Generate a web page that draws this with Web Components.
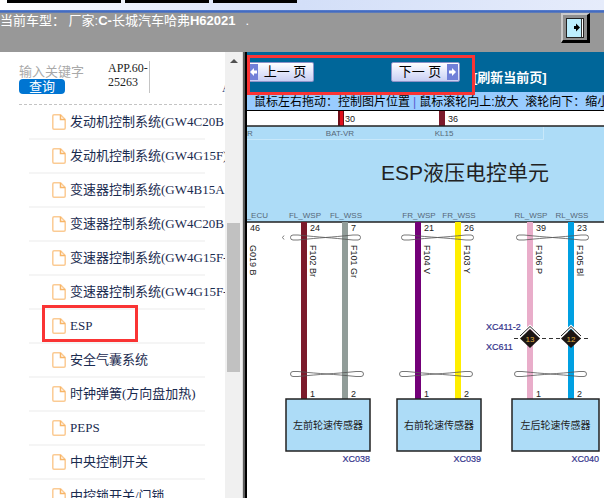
<!DOCTYPE html>
<html lang="zh-CN">
<head>
<meta charset="utf-8">
<title>长城汽车哈弗H6 2021</title>
<style>
  :root{
    --ui: "Liberation Sans", "Noto Sans CJK SC", sans-serif;
    --doc: "Liberation Serif", "Noto Sans CJK SC", serif;
    --mark: #fa3434;
    --bar: #006699;
  }
  html, body{ height:100%; }
  body{ margin:0; overflow:hidden; font-family:var(--ui); }
</style>
</head>
<body>

<wd-app>
  <wd-header slot="header"></wd-header>
  <wd-sidebar slot="side">
    <wd-item>发动机控制系统(GW4C20B</wd-item>
    <wd-item>发动机控制系统(GW4G15F)</wd-item>
    <wd-item>变速器控制系统(GW4B15A</wd-item>
    <wd-item>变速器控制系统(GW4C20B</wd-item>
    <wd-item>变速器控制系统(GW4G15F-</wd-item>
    <wd-item>变速器控制系统(GW4G15F-</wd-item>
    <wd-item marked>ESP</wd-item>
    <wd-item>安全气囊系统</wd-item>
    <wd-item>时钟弹簧(方向盘加热)</wd-item>
    <wd-item>PEPS</wd-item>
    <wd-item>中央控制开关</wd-item>
    <wd-item>中控锁开关/门锁</wd-item>
  </wd-sidebar>
  <wd-toolbar></wd-toolbar>
  <wd-hint>鼠标左右拖动：控制图片位置<i>|</i>鼠标滚轮向上:放大 &nbsp;滚轮向下：缩小</wd-hint>
  <wd-diagram></wd-diagram>
</wd-app>

<script>
(() => {
  "use strict";

  /* small helper: one class per element, markup + styles in an open root */
  const define = (name, css, html) => {
    customElements.define(name, class extends HTMLElement {
      constructor() {
        super();
        this.attachShadow({ mode: "open" }).innerHTML = `<style>${css}</style>${html}`;
      }
    });
  };

  /* ---- page frame ---- */
  define("wd-app", `
    :host{ display:flex; flex-direction:column; height:100vh; overflow:hidden; background:#fff; }
    .main{ flex:1; min-height:0; display:grid; grid-template-columns:242px 5px minmax(0,1fr); }
    .split{ background:linear-gradient(90deg, #d8d8d8 1px, #5c5c5c 1px 3px, #000 3px); }
    .view{ display:flex; flex-direction:column; min-width:0; min-height:0; background:#fff; }
    ::slotted(wd-sidebar){ min-height:0; }
  `, `
    <slot name="header"></slot>
    <div class="main">
      <slot name="side"></slot>
      <div class="split"></div>
      <main class="view"><slot></slot></main>
    </div>
  `);

  /* ---- window strip + current vehicle ---- */
  define("wd-header", `
    :host{ display:block; }
    .tabs{
      display:flex; gap:4px; height:10px; padding-left:7px;
      background:linear-gradient(100deg, #fff, #eef2fc 20%, #d3dff8 50%, #e6ecfb);
    }
    .tabs b{ width:84px; height:3px; background:#000; }
    .tabs b:first-child{ width:114px; }
    .rule{ height:3px; background:linear-gradient(#5b80cf, #3f68be 60%, #6f86b4); }
    .car{
      display:flex; align-items:flex-start; justify-content:space-between;
      height:39px; padding-right:14px; background:#989898; color:#fff;
      font-size:13px; line-height:15px; white-space:pre;
    }
    .dot{ margin-left:10px; }
    button{
      box-sizing:border-box; width:29px; height:30px; padding:0;
      display:grid; place-items:center; background:#8f8f8f;
      border:solid; border-width:2px 3px 3px 2px;
      border-color:#c9c9c9 #000 #000 #c9c9c9;
    }
  `, `
    <div class="tabs"><b></b><b></b><b></b></div>
    <div class="rule"></div>
    <div class="car">
      <span>当前车型： 厂家:<b>C-</b>长城汽车哈弗<b>H62021</b><span class="dot">.</span></span>
      <button type="button" aria-label="退出">
        <svg width="18" height="20" viewBox="0 0 18 20">
          <rect x="0" y="0" width="18" height="20" fill="#222"/>
          <rect x="1" y="1" width="14" height="18" fill="#bdefff"/>
          <rect x="15" y="1" width="2" height="18" fill="#fff"/>
          <path d="M8 8h2V5.500l4 4-4 4V11H8z" fill="#000"/>
          <path d="M15.500 1v18" stroke="#333"/>
        </svg>
      </button>
    </div>
  `);

  /* ---- search + system list + scrollbar ---- */
  define("wd-sidebar", `
    :host{ display:grid; grid-template-columns:minmax(0,1fr) 17px; font-family:var(--doc); }
    .pane{ overflow:hidden; }
    form{
      display:flex; box-sizing:border-box; height:53px; margin:0 3px 0 19px; padding-top:9px;
      border-bottom:1px dashed #c4c4c4;
    }
    .key{ width:89px; }
    input{
      display:block; width:65px; height:15px; margin-top:3px; padding:0; border:0; outline:0;
      background:none; font:13px/15px var(--ui);
    }
    input::placeholder{ color:#a9a9a9; opacity:1; }
    button{
      display:block; width:46px; height:15px; padding:0; border:0; border-radius:4px;
      background:#0075d2; color:#fff; font:13px/14px var(--ui);
    }
    .no{
      width:41px; height:32px; border-right:1px solid #c4c4c4;
      color:#222; font-size:12px; line-height:14px;
    }
    .no span{ display:block; }
    .more{
      width:3px; height:12px; margin:21px -3px 0 auto; overflow:hidden;
      color:#1a3a6c; font-size:12px; line-height:12px; text-decoration:none;
    }
    ul{ margin:0; padding:1px 20px 0 29px; }
    .scroll{ display:flex; flex-direction:column; background:#f0f0f0; }
    .up{ height:17px; display:grid; place-items:center; }
    .up::before{ content:""; border:4px solid transparent; border-top:0; border-bottom:4px solid #505050; }
    .thumb{ flex:149; margin:0 2px; background:#c1c1c1; }
    .before{ flex:154; }
    .after{ flex:126; }
  `, `
    <div class="pane">
      <form>
        <div class="key">
          <input type="text" placeholder="输入关键字" aria-label="输入关键字">
          <button type="button">查询</button>
        </div>
        <div class="no"><span>APP.60-</span><span>25263</span></div>
        <a class="more" href="#">A</a>
      </form>
      <ul role="list"><slot></slot></ul>
    </div>
    <div class="scroll">
      <div class="up"></div><div class="before"></div><div class="thumb"></div><div class="after"></div>
    </div>
  `);

  /* [marked] puts the red frame round an entry */
  define("wd-item", `
    :host{
      display:block; position:relative; box-sizing:border-box; height:34px;
      border-bottom:2px solid #f5f5f5;
    }
    a{
      display:flex; align-items:center; gap:4px; height:32px; padding-left:23px;
      color:#1a2b50; font-size:13px; line-height:16px; white-space:nowrap; text-decoration:none;
    }
    svg{ flex:none; }
    :host([marked])::after{
      content:""; position:absolute; left:13px; top:-5px;
      box-sizing:border-box; width:96px; height:37px; border:3px solid var(--mark);
    }
  `, `
    <a href="#">
      <svg width="14" height="16" viewBox="0 0 14 16" fill="none" stroke="#fbcb94" stroke-width="1.500">
        <path d="M2 .8h6.500l4.700 4.700V14q0 1.200-1.200 1.200H2Q.8 15.200.8 14V2Q.8.8 2 .8z"/>
        <path d="M8.500 1v4.500H13" stroke="#f8b566"/>
      </svg>
      <slot></slot>
    </a>
  `);

  /* ---- prev / next page ---- */
  define("wd-toolbar", `
    :host{
      display:flex; align-items:flex-start; position:relative;
      box-sizing:border-box; height:40px; padding-top:10px; background:var(--bar);
    }
    button{
      display:flex; align-items:stretch; box-sizing:border-box; height:20px; padding:1px;
      border:1px solid #8d93c8; border-radius:2px;
      background:linear-gradient(#fff, #e3e7fb 50%, #c9cff3);
      color:#000; font:13px/16px var(--ui); white-space:nowrap;
    }
    .prev{ width:67px; padding-left:0; border-left:0; }
    .next{ width:69px; margin-left:77px; }
    button span{ flex:1; text-align:center; }
    button svg{ flex:none; background:#7180d8; }
    a{ margin:8px 0 0 13px; color:#fff; font-size:13px; line-height:16px; font-weight:bold; text-decoration:none; white-space:nowrap; }
    .mark{
      position:absolute; left:0; top:3px; z-index:1; box-sizing:border-box;
      width:228px; height:40px; border:3px solid var(--mark); pointer-events:none;
    }
  `, `
    <button class="prev" type="button">
      <svg width="11" height="16" viewBox="0 0 11 16"><path d="M3 8l4-4v2.500h3v3H7V12z" fill="#fff"/></svg>
      <span>上一 页</span>
    </button>
    <button class="next" type="button">
      <span>下一 页</span>
      <svg width="11" height="16" viewBox="0 0 11 16"><path d="M9 8L5 4v2.500H2v3h3V12z" fill="#fff"/></svg>
    </button>
    <a href="#">[刷新当前页]</a>
    <div class="mark"></div>
  `);

  define("wd-hint", `
    :host{
      display:block; box-sizing:border-box; height:19px; padding:1px 0 0 7px; overflow:hidden;
      border-bottom:1px solid #000; background:#99ccff;
      color:#000; font-size:12px; line-height:18px; white-space:nowrap;
    }
    ::slotted(i){ margin:0 3px; color:#5a5ad0; font-style:normal; }
  `, `<slot></slot>`);

  /* ---- wiring diagram ---- */
  const WIRE_TOP = 222, BOX_TOP = 399;

  // x = wire centre, name = terminal, pin = ECU pin, code = wire label
  const WIRES = [
    { x: 304, color: "#7b1a2b", name: "FL_WSP", pin: 24, code: "F102 Br", end: 1 },
    { x: 345, color: "#919d99", name: "FL_WSS", pin: 7,  code: "F101 Gr", end: 2 },
    { x: 418, color: "#730078", name: "FR_WSP", pin: 21, code: "F104 V",  end: 1 },
    { x: 458, color: "#ffee00", name: "FR_WSS", pin: 26, code: "F103 Y",  end: 2 },
    { x: 530, color: "#e9adca", name: "RL_WSP", pin: 39, code: "F106 P",  end: 1, plug: 13 },
    { x: 571, color: "#00a0e2", name: "RL_WSS", pin: 23, code: "F105 Bl", end: 2, plug: 12 },
  ];

  const SENSORS = [
    { x: 286, w: 84, label: "左前轮速传感器", id: "XC038" },
    { x: 397, w: 84, label: "右前轮速传感器", id: "XC039" },
    { x: 512, w: 87, label: "左后轮速传感器", id: "XC040" },
  ];

  // twisted-pair mark between x1 and x2, nearly flat in the middle
  const twist = (x1, x2, y) =>
    `<path class="twist" d="M${x1 + 3} ${y - 2.5}H${x1 + 8}C${x1 + 32} ${y} ${x2 - 32} ${y} ${x2 - 8} ${y + 2.5}H${x2 - 3}
      a2.5 2.5 0 0 0 0-5H${x2 - 8}C${x2 - 32} ${y} ${x1 + 32} ${y} ${x1 + 8} ${y + 2.5}H${x1 + 3}a2.5 2.5 0 0 1 0-5"/>`;

  const wire = w => `
    <rect x="${w.x - 3}" y="${WIRE_TOP}" width="6" height="${BOX_TOP - WIRE_TOP}" fill="${w.color}"/>
    <text class="term" x="${w.x + 1}" y="218" text-anchor="middle">${w.name}</text>
    <text x="${w.x + 6}" y="231">${w.pin}</text>
    <text transform="translate(${w.x + 6} 245) rotate(90)">${w.code}</text>
    <text x="${w.x + 6}" y="397">${w.end}</text>`;

  const plug = w => `
    <path d="M${w.x} 329l10 9.500-10 9.500-10-9.500z" fill="#1c1614"/>
    <path d="M${w.x - 10} 336l10-9.500 10 9.500" fill="none" stroke="#fff" stroke-width="3"/>
    <path d="M${w.x - 10} 336l10-9.500 10 9.500" fill="none" stroke="#222"/>
    <text class="plug" x="${w.x}" y="342" text-anchor="middle">${w.plug}</text>`;

  const sensor = s => `
    <rect class="unit" x="${s.x}" y="${BOX_TOP}" width="${s.w}" height="52"/>
    <text class="label" x="${s.x + s.w / 2}" y="429" text-anchor="middle">${s.label}</text>
    <text class="id" x="${s.x + s.w}" y="462" text-anchor="end">${s.id}</text>`;

  define("wd-diagram", `
    :host{ display:block; flex:1; min-height:0; overflow:hidden; }
    svg{ display:block; width:100%; height:100%; font:9px var(--ui); fill:#222; }
    .unit{ fill:#addcf7; stroke:#222; stroke-width:1.500; }
    .term{ font-size:8px; fill:#566878; }
    .title{ font-size:21px; }
    .label{ font-size:10px; }
    .id{ fill:#33338c; stroke:#33338c; stroke-width:.2; }
    .plug{ font-size:8px; fill:#e0b040; }
    .twist{ fill:none; stroke:#555; stroke-width:.8; }
  `, `
    <svg viewBox="247 111 357 387" preserveAspectRatio="xMinYMin slice">
      <rect x="338" y="111" width="6" height="15" fill="#6d0b16"/>
      <rect x="340" y="111" width="3" height="15" fill="#e0101c"/>
      <rect x="439" y="111" width="6" height="15" fill="#7b1a2b"/>
      <text x="345" y="122">30</text>
      <text x="448" y="122">36</text>

      <rect class="unit" x="200" y="126" width="500" height="96"/>
      <path d="M247 139.500H543.500V127" fill="none" stroke="#c8e8fa"/>
      <text class="term" x="247" y="136">R</text>
      <text class="term" x="340" y="136" text-anchor="middle">BAT-VR</text>
      <text class="term" x="444" y="136" text-anchor="middle">KL15</text>
      <text class="title" x="381" y="180">ESP液压电控单元</text>
      <text class="term" x="268" y="218" text-anchor="end">_ECU</text>

      <text x="250" y="231">46</text>
      <text transform="translate(250 245) rotate(90)">G019 B</text>
      ${WIRES.map(wire).join("")}

      <path class="twist" d="M284 235.500q-3 2 0 4"/>
      ${twist(290, 361, 237.5)}${twist(401, 474, 237.5)}${twist(516, 589, 237.5)}
      ${twist(290, 364, 374)}${twist(399, 473, 374)}${twist(514, 587, 374)}

      <path d="M514 338.500H589" stroke="#333" stroke-dasharray="4 3"/>
      ${WIRES.filter(w => w.plug).map(plug).join("")}
      <text class="id" x="486" y="330">XC411-2</text>
      <text class="id" x="486" y="350">XC611</text>
      ${SENSORS.map(sensor).join("")}
    </svg>
  `);
})();
</script>
</body>
</html>
